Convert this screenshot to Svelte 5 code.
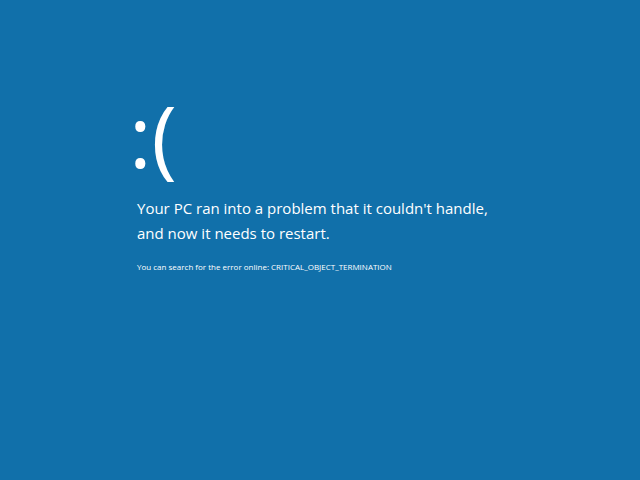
<script>
  const code = 'CRITICAL_OBJECT_TERMINATION';
</script>

<main>
  <div class="face">:(</div>
  <h1>Your PC ran into a problem that it couldn't handle, and now it needs to restart.</h1>
  <p>You can search for the error online: {code}</p>
</main>

<style>
  :global(body) {
    margin: 0;
    background: #1170aa;
  }
  main {
    box-sizing: border-box;
    min-height: 100vh;
    padding: 83px 128px 0 137px;
    background: #1170aa;
    color: #fff;
    font-family: "Open Sans", "Noto Sans", sans-serif;
  }
  .face {
    margin: 0 0 9px -8px;
    font-size: 86px;
    line-height: 104px;
  }
  h1 {
    margin: 0;
    font-size: 15px;
    font-weight: 400;
    line-height: 25px;
  }
  p {
    margin: 15px 0 0;
    font-size: 8px;
    line-height: 12px;
  }
</style>
